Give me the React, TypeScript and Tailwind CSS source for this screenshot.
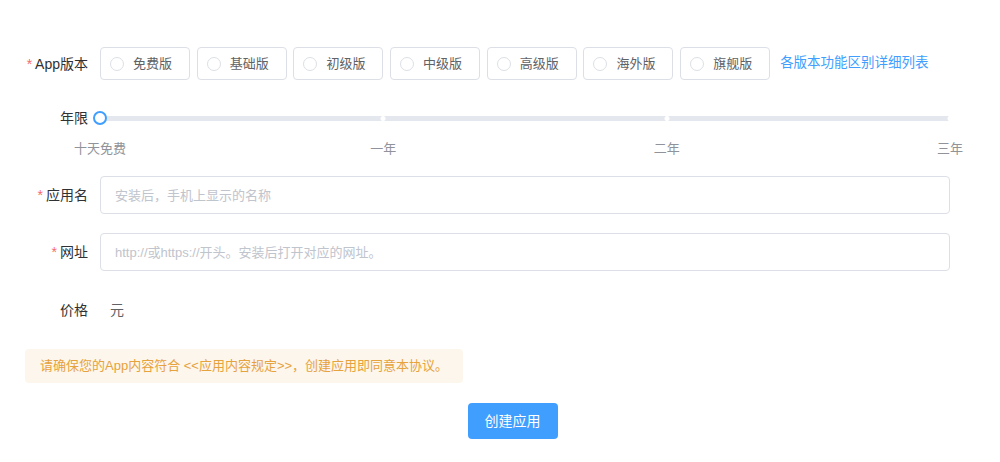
import { useState } from "react"

const versions = ["免费版", "基础版", "初级版", "中级版", "高级版", "海外版", "旗舰版"]
const marks = ["十天免费", "一年", "二年", "三年"]

function Label({ text, required }: { text: string; required?: boolean }) {
  return (
    <div className="w-[75px] shrink-0 pr-[12px] text-right text-[14px] text-[#303133] leading-5">
      {required && <span className="mr-[3px] text-[#f56c6c]">*</span>}
      {text}
    </div>
  )
}

export default function App() {
  const [version, setVersion] = useState<string | null>(null)

  return (
    <div className="min-h-screen w-full bg-white pl-[25px] pr-[50px] pt-[47px] font-['Liberation_Sans','Noto_Sans_CJK_SC',sans-serif]">
      {/* App版本 */}
      <div className="flex items-center">
        <Label text="App版本" required />
        <div className="flex items-center gap-[6.7px]">
          {versions.map((v) => (
            <button
              key={v}
              onClick={() => setVersion(v)}
              className="flex h-[33px] w-[90px] items-center rounded-[4px] border border-[#dcdfe6] bg-white pl-[9px]"
            >
              <span
                className={`h-[14px] w-[14px] rounded-full border ${
                  version === v ? "border-[#409eff] bg-[#409eff]" : "border-[#dcdfe6]"
                }`}
              ></span>
              <span className="ml-[9px] text-[13px] text-[#606266]">{v}</span>
            </button>
          ))}
        </div>
        <a className="ml-[10px] text-[13.5px] text-[#409eff]">各版本功能区别详细列表</a>
      </div>

      {/* 年限 */}
      <div className="mt-[32px] flex h-[12px] items-center">
        <Label text="年限" />
        <div className="relative flex h-[5px] flex-1 items-center rounded-full bg-[#e4e7ed]">
          <span className="absolute left-[33.333%] h-[5px] w-[5px] -translate-x-1/2 rounded-full bg-white"></span>
          <span className="absolute left-[66.666%] h-[5px] w-[5px] -translate-x-1/2 rounded-full bg-white"></span>
          <span className="absolute left-full h-[5px] w-[5px] -translate-x-1/2 rounded-full bg-white"></span>
          <span className="absolute left-0 h-[14px] w-[14px] -translate-x-1/2 rounded-full border-2 border-[#409eff] bg-white"></span>
        </div>
      </div>
      <div className="mt-[15px] flex h-[20px]">
        <div className="w-[75px] shrink-0"></div>
        <div className="relative flex-1">
          {marks.map((m, i) => (
            <span
              key={m}
              className={`absolute top-0 -translate-x-1/2 whitespace-nowrap text-[13px] leading-5 text-[#909399] ${
                ["left-0", "left-[33.333%]", "left-[66.666%]", "left-full"][i]
              }`}
            >
              {m}
            </span>
          ))}
        </div>
      </div>

      {/* 应用名 */}
      <div className="mt-[17px] flex items-center">
        <Label text="应用名" required />
        <input
          placeholder="安装后，手机上显示的名称"
          className="h-[38px] flex-1 rounded-[4px] border border-[#dcdfe6] px-[14px] text-[13px] text-[#606266] outline-none placeholder:text-[#c0c4cc]"
        />
      </div>

      {/* 网址 */}
      <div className="mt-[19px] flex items-center">
        <Label text="网址" required />
        <input
          placeholder="http://或https://开头。安装后打开对应的网址。"
          className="h-[38px] flex-1 rounded-[4px] border border-[#dcdfe6] px-[14px] text-[13px] text-[#606266] outline-none placeholder:text-[#c0c4cc]"
        />
      </div>

      {/* 价格 */}
      <div className="mt-[29px] flex h-[20px] items-center">
        <Label text="价格" />
        <span className="ml-[10px] text-[14px] text-[#606266]">元</span>
      </div>

      {/* 提示 */}
      <div className="mt-[29px] flex h-[34px] w-fit items-center rounded-[4px] bg-[#fdf6ec] px-[15px] text-[13px] text-[#e6a23c]">
        请确保您的App内容符合 &lt;&lt;应用内容规定&gt;&gt;，创建应用即同意本协议。
      </div>

      <div className="mt-[20px] flex justify-center pl-[50px]">
        <button className="h-[36px] w-[90px] rounded-[4px] bg-[#409eff] text-[14px] text-white">
          创建应用
        </button>
      </div>
    </div>
  )
}
